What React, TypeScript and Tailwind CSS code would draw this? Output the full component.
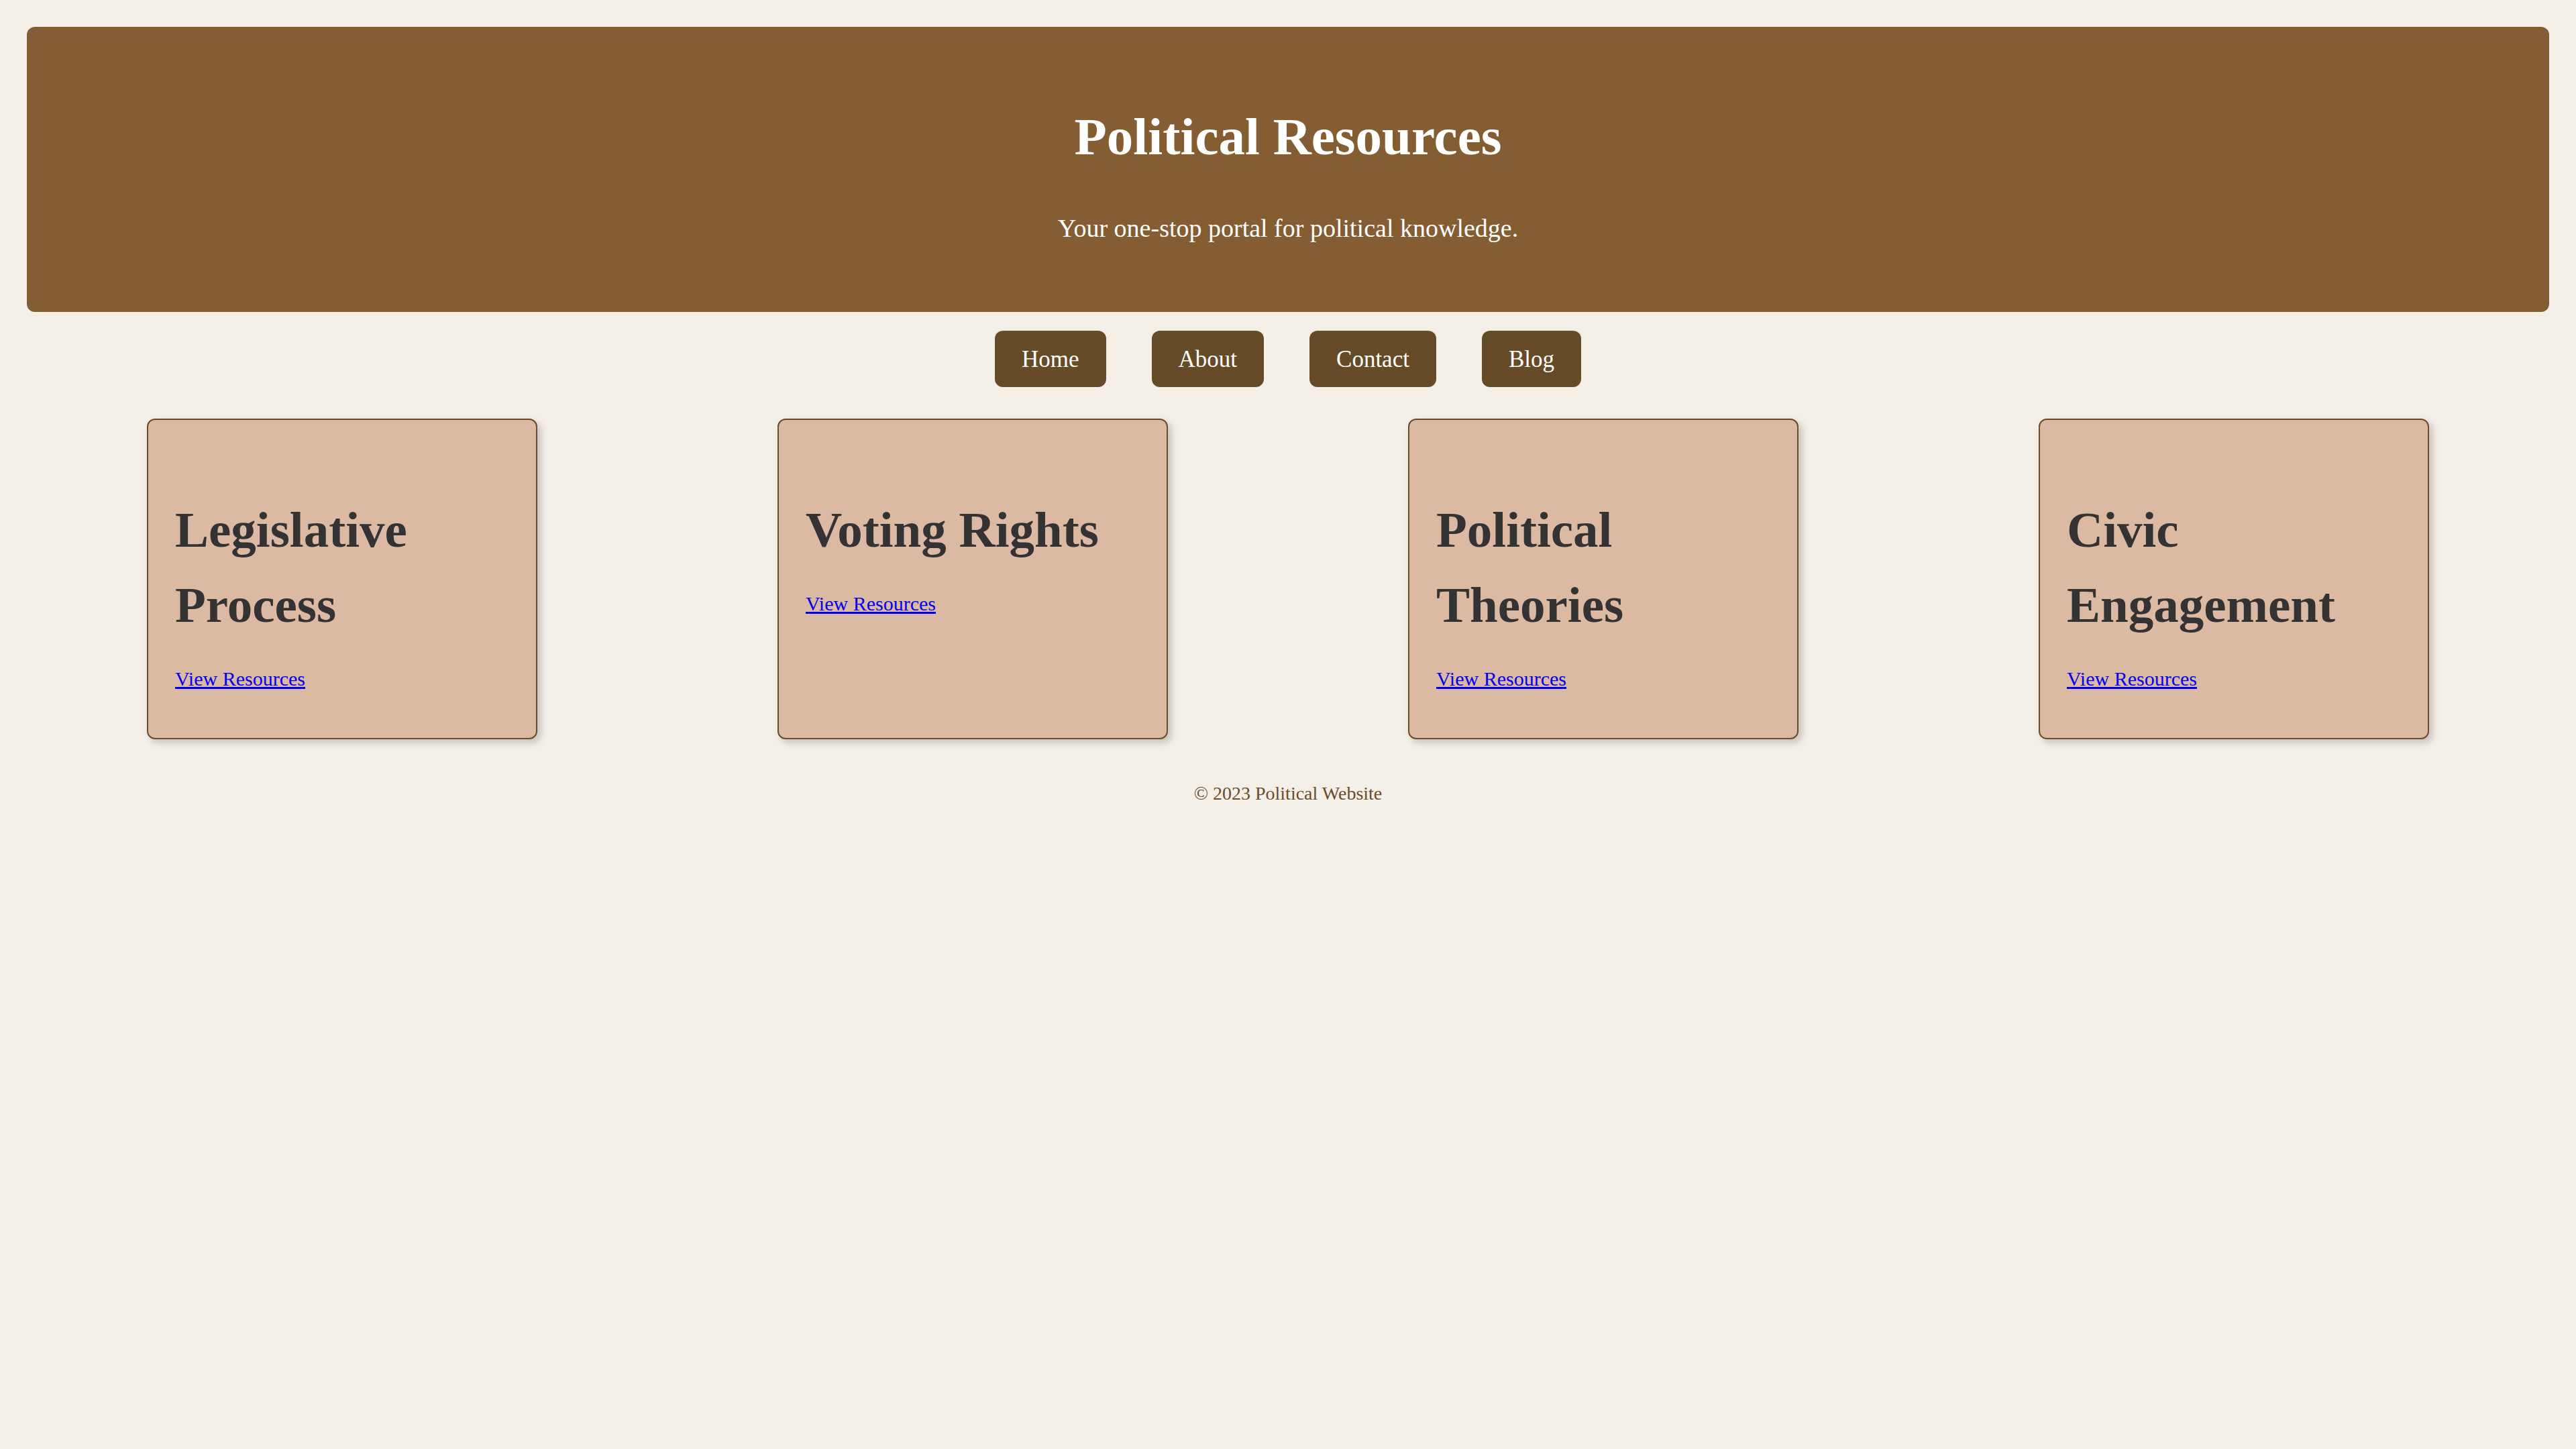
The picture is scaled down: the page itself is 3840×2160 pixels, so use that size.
export default function App() {
  const cards = [
    "Legislative Process",
    "Voting Rights",
    "Political Theories",
    "Civic Engagement",
  ];
  const nav = ["Home", "About", "Contact", "Blog"];
  return (
    <div
      className="min-h-[2160px] bg-[#f4efe7] px-[40px] pt-[40px]"
      style={{ fontFamily: '"Liberation Serif", "Times New Roman", serif' }}
    >
      <header className="flex flex-col items-center rounded-[12px] bg-[#845d33] pt-[124px] pb-[106px] text-white">
        <h1 className="text-[79px] font-bold leading-none">Political Resources</h1>
        <p className="mt-[78px] text-[38px] leading-none">
          Your one-stop portal for political knowledge.
        </p>
      </header>
      <nav className="mt-[28px] flex justify-center gap-[68px]">
        {nav.map((n) => (
          <a
            key={n}
            href="#"
            className="flex h-[84px] items-center rounded-[12px] bg-[#664b29] px-[40px] text-[35px] leading-none text-white"
          >
            {n}
          </a>
        ))}
      </nav>
      <main className="mt-[47px] flex justify-around">
        {cards.map((c) => (
          <section
            key={c}
            className="w-[582px] rounded-[12px] border-2 border-[#6b4c2a] bg-[#dcb9a3] px-[40px] pt-[108px] pb-[64px] shadow-[5px_5px_12px_rgba(0,0,0,0.2)]"
          >
            <h2 className="text-[75px] font-bold leading-[112px] text-[#333333]">{c}</h2>
            <a
              href="#"
              className="mt-[30px] block text-[30px] leading-[48px] text-[#0000ee] underline"
            >
              View Resources
            </a>
          </section>
        ))}
      </main>
      <footer className="mt-[67px] text-center text-[28px] leading-none text-[#6b4c2a]">
        © 2023 Political Website
      </footer>
    </div>
  );
}
